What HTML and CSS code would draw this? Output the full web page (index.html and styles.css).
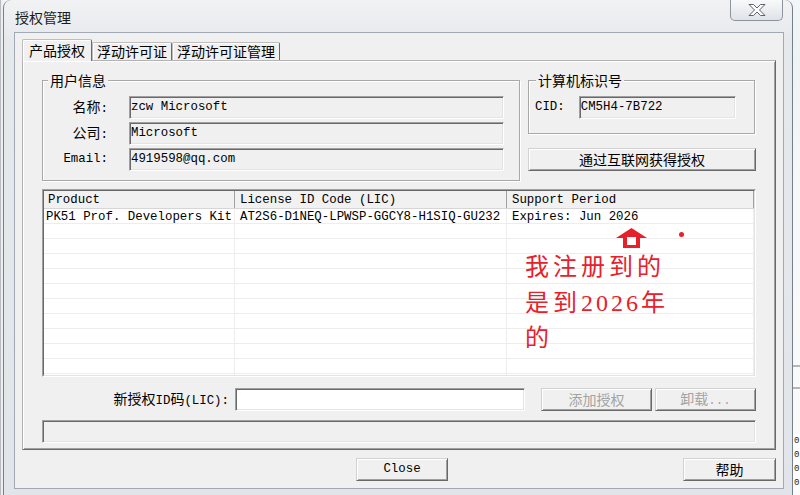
FILE: index.html
```html
<!DOCTYPE html>
<html lang="zh-CN">
<head>
<meta charset="utf-8">
<title>授权管理</title>
<link rel="stylesheet" href="styles.css">
</head>
<body>
<div class="desktop">
  <div class="bg-left"></div>
  <div class="window">
    <div class="titlebar">
      <span class="title">授权管理</span>
      <div class="close-btn">
        <svg width="18" height="12" viewBox="0 0 18 12"><path d="M1 0.5H5.5L9 4L12.5 0.5H17L11.5 6L17 11.5H12.5L9 8L5.5 11.5H1L6.5 6Z" fill="#fbfbfb" stroke="#5c636b" stroke-width="1" stroke-linejoin="round"/></svg>
      </div>
    </div>
    <div class="client">
      <div class="tabs">
        <div class="tab active">产品授权</div>
        <div class="tab">浮动许可证</div>
        <div class="tab">浮动许可证管理</div>
      </div>
      <div class="panel">
        <div class="top">
          <div class="group user-group">
            <div class="group-title">用户信息</div>
            <div class="fields">
              <div class="lbl"><span class="zh">名称</span>:</div>
              <div class="field">zcw Microsoft</div>
              <div class="lbl"><span class="zh">公司</span>:</div>
              <div class="field">Microsoft</div>
              <div class="lbl">Email:</div>
              <div class="field">4919598@qq.com</div>
            </div>
          </div>
          <div class="side">
            <div class="group cid-group">
              <div class="group-title">计算机标识号</div>
              <div class="cid-row">
                <div class="cid-lbl">CID:</div>
                <div class="field cid-field">CM5H4-7B722</div>
              </div>
            </div>
            <button class="btn btn-wide"><span class="zh">通过互联网获得授权</span></button>
          </div>
        </div>
        <div class="list">
          <div class="list-inner">
            <div class="list-head">
              <div>Product</div>
              <div>License ID Code (LIC)</div>
              <div>Support Period</div>
            </div>
            <div class="row"><div>PK51 Prof. Developers Kit</div><div>AT2S6-D1NEQ-LPWSP-GGCY8-H1SIQ-GU232</div><div>Expires: Jun 2026</div></div>
            <div class="row"><div></div><div></div><div></div></div>
            <div class="row"><div></div><div></div><div></div></div>
            <div class="row"><div></div><div></div><div></div></div>
            <div class="row"><div></div><div></div><div></div></div>
            <div class="row"><div></div><div></div><div></div></div>
            <div class="row"><div></div><div></div><div></div></div>
            <div class="row"><div></div><div></div><div></div></div>
            <div class="row"><div></div><div></div><div></div></div>
            <div class="row"><div></div><div></div><div></div></div>
            <div class="row"><div></div><div></div><div></div></div>
            <div class="row"><div></div><div></div><div></div></div>
          </div>
          <svg class="note-arrow" width="31" height="20" viewBox="0 0 31 20"><polygon points="15.5,0 31,10 24,10 24,20 7,20 7,10 0,10" fill="#e8202a"/><rect x="11" y="9" width="9" height="8" fill="#fff"/></svg>
          <div class="note-dot"></div>
          <div class="note">我注册到的<br>是到<span class="num">2026</span>年<br>的</div>
        </div>
        <div class="add-row">
          <div class="add-label"><span class="zh">新授权</span>ID<span class="zh">码</span>(LIC):</div>
          <div class="field new-field"></div>
          <button class="btn disabled btn-add"><span class="zh">添加授权</span></button>
          <button class="btn disabled btn-uninstall"><span class="btn-text"><span class="zh">卸载</span>...</span></button>
        </div>
        <div class="field status"></div>
      </div>
      <div class="footer">
        <button class="btn btn-close">Close</button>
        <button class="btn btn-help"><span class="zh">帮助</span></button>
      </div>
    </div>
  </div>
  <div class="bg-right">
    <div class="bg-fill"></div>
    <div class="bg-rule"></div>
    <div class="bg-gap"></div>
    <div class="bg-rule"></div>
    <div class="bg-digits">0<br>0<br>0<br>0</div>
  </div>
</div>
</body>
</html>
```
FILE: styles.css
```css
* { box-sizing: border-box; }
html, body { margin: 0; padding: 0; }
body {
  width: 800px;
  height: 495px;
  overflow: hidden;
  background: #f4f5f7;
  font-family: "Liberation Mono", "Noto Sans CJK SC", monospace;
  font-size: 12.4px;
  line-height: 17px;
  color: #000;
}
.zh { font-family: "Noto Sans CJK SC", sans-serif; font-size: 14px; }

.desktop { display: flex; width: 800px; height: 495px; overflow: hidden; }
.bg-left { width: 3px; flex: none; background: linear-gradient(to right, #b8bcc0 0, #b8bcc0 1px, #eceef0 1px); }

.window {
  width: 790px;
  flex: none;
  height: 500px;
  display: flex;
  flex-direction: column;
  padding: 0 8px 0 10px;
  border: 1px solid #76808b;
  border-top: none;
  border-radius: 8px 8px 0 0;
  background: linear-gradient(to bottom, #f1f2f4 0, #e6e9ec 40px, #e1e5e9 100%);
}
.titlebar { height: 32px; flex: none; display: flex; align-items: flex-start; }
.title {
  font-family: "Noto Sans CJK SC", sans-serif;
  font-size: 14px;
  line-height: 20px;
  margin-top: 7px;
  padding-left: 1px;
  color: #1b1b1b;
}
.close-btn {
  margin-left: auto;
  margin-right: 1px;
  width: 53px;
  height: 21px;
  border: 1px solid #8d949c;
  border-top: none;
  border-radius: 0 0 5px 5px;
  background: linear-gradient(to bottom, #f8f9fa, #dfe3e7);
  display: flex;
  align-items: center;
  justify-content: center;
}

.client {
  height: 457px;
  flex: none;
  border: 1px solid #a1aab4;
  background: #f0f0f0;
  display: flex;
  flex-direction: column;
}

.tabs { height: 27px; flex: none; display: flex; align-items: flex-end; padding-left: 7px; }
.tab {
  height: 18px;
  padding: 0 4px;
  border: 1px solid;
  border-color: #bdbdbd #6a6a6a transparent #bdbdbd;
  border-bottom: none;
  border-radius: 2px 2px 0 0;
  box-shadow: inset 1px 1px 0 #fff;
  background: #f0f0f0;
  font-family: "Noto Sans CJK SC", sans-serif;
  font-size: 14px;
  line-height: 17px;
  white-space: nowrap;
}
.tab.active {
  height: 22px;
  padding: 0 6px;
  line-height: 20px;
  margin-bottom: -1px;
  position: relative;
  z-index: 1;
}

.panel {
  flex: none;
  margin-left: 7px;
  width: 754px;
  height: 390px;
  border: 1px solid;
  border-color: #b2b2b2 #6a6a6a #6a6a6a #b2b2b2;
  box-shadow: inset 1px 1px 0 #fff, inset -1px -1px 0 #a0a0a0;
  padding: 19px 19px 0;
}

.top { display: flex; gap: 8px; align-items: flex-start; }
.group { border: 1px solid #a8a8a8; box-shadow: inset 1px 1px 0 #fff, 1px 1px 0 #fff; }
.group-title {
  display: table;
  margin: -9px 0 0 5px;
  padding: 0 2px;
  background: #f0f0f0;
  font-family: "Noto Sans CJK SC", sans-serif;
  font-size: 14px;
  line-height: 16px;
}
.cid-group .group-title { margin-left: 7px; }
.user-group { width: 478px; flex: none; }
.fields {
  display: grid;
  grid-template-columns: 65px 375px;
  column-gap: 21px;
  row-gap: 3px;
  padding: 8px 0 9px;
  align-items: center;
}
.lbl { text-align: right; line-height: 17px; white-space: nowrap; }

.field {
  height: 23px;
  border: 1px solid;
  border-color: #a0a0a0 #fff #fff #a0a0a0;
  box-shadow: inset 1px 1px 0 #696969, inset -1px -1px 0 #e3e3e3;
  padding: 2px 0 0 1px;
  line-height: 17px;
  background: #f0f0f0;
  white-space: nowrap;
  overflow: hidden;
}

.side { width: 228px; flex: none; display: flex; flex-direction: column; }
.cid-group { width: 227px; }
.cid-row { display: flex; align-items: center; padding: 8px 0 14px 6px; }
.cid-lbl { margin-right: 14px; line-height: 17px; }
.cid-field { width: 157px; }

.btn {
  height: 23px;
  border: 1px solid;
  border-color: #d2d2d2 #696969 #696969 #d2d2d2;
  box-shadow: inset 1px 1px 0 #fff, inset -1px -1px 0 #a0a0a0;
  background: #f0f0f0;
  display: flex;
  align-items: center;
  justify-content: center;
  padding: 0;
  font-family: inherit;
  font-size: inherit;
  line-height: 17px;
  color: #000;
}
.btn.disabled { color: #a3a3a3; }
.btn-wide { margin-top: 14px; width: 228px; }

.list {
  position: relative;
  margin-top: 8px;
  height: 188px;
  border: 1px solid;
  border-color: #a0a0a0 #fff #fff #a0a0a0;
}
.list-inner {
  height: 100%;
  border: 1px solid;
  border-color: #696969 #e3e3e3 #e3e3e3 #696969;
  background: #fff;
  overflow: hidden;
}
.list-head, .row { display: grid; grid-template-columns: 191px 272px 247px; }
.list-head { height: 18px; background: #f1f1f1; border-bottom: 1px solid #d6d6d6; }
.list-head > div { border-right: 1px solid #a0a0a0; padding: 1px 0 0 5px; line-height: 16px; white-space: nowrap; }
.list-head > div:first-child { padding-left: 4px; }
.row { height: 15px; border-bottom: 1px solid #ededed; }
.row > div { border-right: 1px solid #ededed; padding: 0 0 0 5px; line-height: 16px; white-space: nowrap; }
.row > div:first-child { padding-left: 2px; }

.note-arrow { position: absolute; left: 573px; top: 38px; }
.note-dot { position: absolute; left: 636px; top: 42px; width: 5px; height: 5px; border-radius: 50%; background: #e8202a; }
.note {
  position: absolute;
  left: 482px;
  top: 60px;
  color: #e8202a;
  font-family: "Liberation Serif", "Noto Sans CJK SC", serif;
  font-size: 24px;
  line-height: 35.5px;
  letter-spacing: 4px;
  white-space: nowrap;
}
.note .num { letter-spacing: 3px; }

.add-row { display: flex; align-items: center; justify-content: flex-end; margin-top: 11px; }
.add-label { margin-right: 6px; line-height: 17px; white-space: nowrap; }
.new-field { width: 290px; background: #fff; }
.btn-add { margin-left: 16px; width: 111px; }
.btn-uninstall { margin-left: 3px; width: 101px; }

.status { margin-top: 9px; height: 23px; }

.footer { display: flex; margin-top: 8px; padding: 0 7px; flex: none; }
.btn-close { margin-left: 334px; width: 92px; }
.btn-help { margin-left: auto; width: 93px; }

.bg-right {
  width: 7px;
  flex: none;
  display: flex;
  flex-direction: column;
  background: linear-gradient(to bottom, #f3f6f8 0, #eef3f6 60px, #f7f8f9 200px, #fafafa 100%);
  overflow: hidden;
}
.bg-fill { flex: 1; }
.bg-rule { height: 2px; background: #b3b7bb; flex: none; }
.bg-gap { height: 20px; flex: none; }
.bg-digits {
  margin-top: 45px;
  margin-bottom: 5px;
  padding-left: 1px;
  font-size: 9px;
  line-height: 14px;
  color: #222;
  background: #fff;
}
```
